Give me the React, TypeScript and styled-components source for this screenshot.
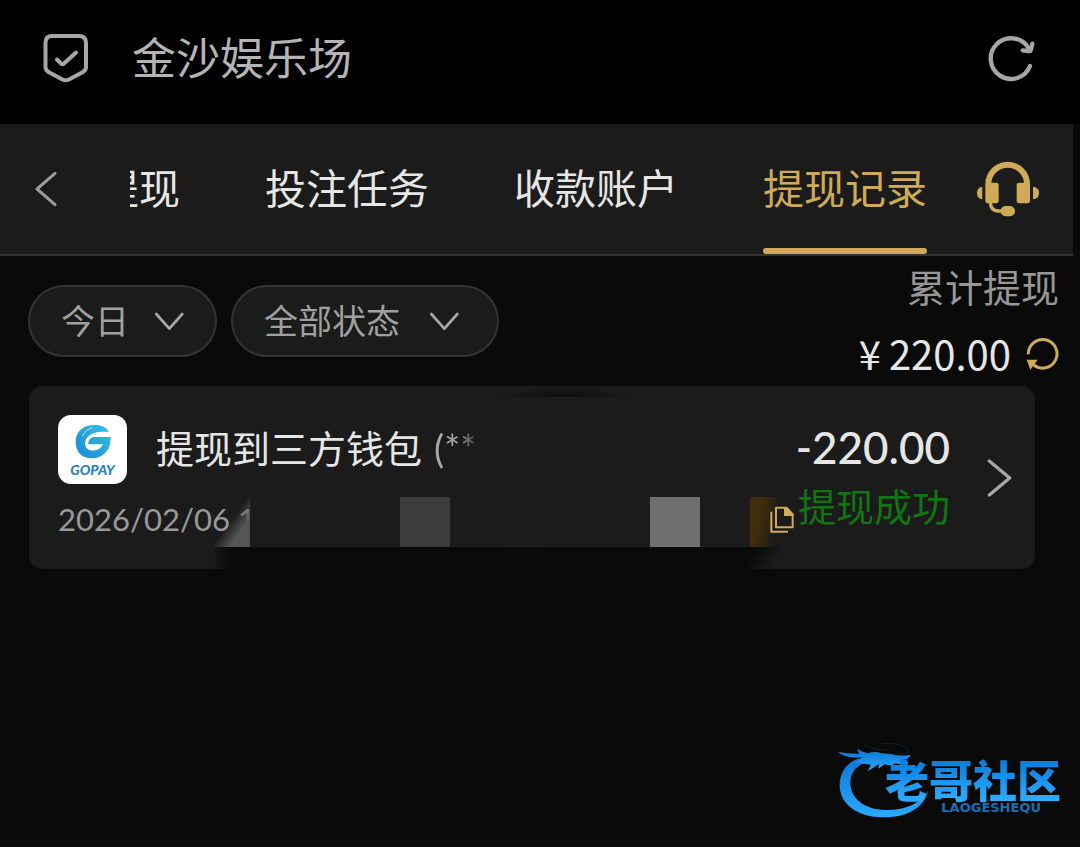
import React from "react";
import styled, { createGlobalStyle } from "styled-components";

const gold = "#cfab58";
const panel = "#1b1b1b";
const page = "#0a0a0a";
const cjk = `"Noto Sans CJK SC", sans-serif`;
const latin = `Lato, "Noto Sans CJK SC", sans-serif`;

const GlobalStyle = createGlobalStyle`
  * { box-sizing: border-box; }
  body {
    margin: 0;
    background: ${page};
    color: #e6e6e6;
    font-family: ${cjk};
  }
  button, select {
    margin: 0;
    padding: 0;
    border: 0;
    background: none;
    color: inherit;
    font: inherit;
    cursor: pointer;
  }
  svg { display: block; flex: none; }
  h1, h2, p { margin: 0; font-weight: 400; }
`;

const Page = styled.div`
  position: relative;
  min-height: 100vh;
  overflow: hidden;
`;

const TopBar = styled.header`
  display: flex;
  align-items: center;
  height: 124px;
  padding: 0 44px 8px 42px;
  background: #000;
`;

const SiteTitle = styled.h1`
  flex: 1;
  margin-left: 42px;
  padding-bottom: 4px;
  color: #b4b4b4;
  font-size: 44px;
  line-height: 64px;
`;

const TabBar = styled.div`
  display: flex;
  align-items: center;
  height: 132px;
  margin-right: 7px;
  padding: 0 33px 0 34px;
  background: ${panel};
  border-bottom: 2px solid #333;
`;

const BackButton = styled.button`
  width: 96px;
`;

const Tabs = styled.nav`
  display: flex;
  flex: 1;
  align-self: stretch;
  justify-content: flex-end;
  gap: 85px;
  min-width: 0;
  margin-right: 49px;
  overflow: hidden;
`;

const Tab = styled.button<{ $active?: boolean }>`
  display: flex;
  flex: none;
  flex-direction: column;
  color: ${(p) => (p.$active ? gold : "#e6e6e6")};
  font-size: 41px;
  line-height: 124px;
  white-space: nowrap;

  &::after {
    content: "";
    width: 100%;
    height: 6px;
    border-radius: 3px;
    background: ${(p) => (p.$active ? gold : "transparent")};
  }
`;

const Summary = styled.section`
  display: flex;
  align-items: center;
  justify-content: space-between;
  padding: 0 21px 0 28px;
`;

const Filters = styled.div`
  display: flex;
  gap: 14px;
`;

const Pill = styled.label<{ $wide?: boolean }>`
  display: flex;
  align-items: center;
  gap: ${(p) => (p.$wide ? 29 : 25)}px;
  height: 72px;
  padding: 0 ${(p) => (p.$wide ? 37 : 30)}px 0 31px;
  border: 2px solid #333;
  border-radius: 36px;
  background: ${panel};
  color: #a0a0a0;
`;

const PillSelect = styled.select`
  appearance: none;
  padding-bottom: 2px;
  font-size: 34px;
  line-height: 50px;
  outline: none;
`;

const Totals = styled.div`
  display: flex;
  flex-direction: column;
  align-items: flex-end;
`;

const TotalLabel = styled.p`
  padding-bottom: 4px;
  color: #979797;
  font-size: 38px;
  line-height: 60px;
`;

const TotalValue = styled.div`
  display: flex;
  align-items: center;
  font-size: 40px;
  line-height: 66px;
`;

const Currency = styled.span`
  margin-right: 8px;
`;

const RefreshTotal = styled.button`
  margin-left: 15px;
`;

const Card = styled.article`
  position: relative;
  display: flex;
  align-items: center;
  margin: 0 45px 0 29px;
  padding: 29px 23px 28px 29px;
  border-radius: 14px;
  background: ${panel};
`;

const Details = styled.div`
  flex: 1;
  min-width: 0;
`;

const TitleRow = styled.div`
  display: flex;
  align-items: center;
  gap: 29px;
`;

const WalletLogo = styled.div`
  display: flex;
  flex-direction: column;
  align-items: center;
  width: 69px;
  height: 69px;
  padding-top: 8px;
  border-radius: 13px;
  background: #fff;
`;

const WalletName = styled.span`
  color: #2b7fc0;
  font: italic 900 14px/20px ${latin};
`;

const RecordTitle = styled.h2`
  padding-bottom: 4px;
  font-size: 38px;
  line-height: 56px;
  white-space: nowrap;
`;

const Account = styled.span`
  margin-left: 12px;
  font-family: ${latin};
  color: transparent;
  background: linear-gradient(90deg, #a8a8a8 50%, #4a4a4a);
  background-clip: text;
`;

const MetaRow = styled.div`
  display: flex;
  align-items: center;
  justify-content: space-between;
  height: 44px;
  margin-top: 13px;
  padding-right: 2px;
  color: #999;
  font: 400 31px/44px ${latin};
`;

const CopyButton = styled.button`
  position: relative;
  z-index: 1;
`;

const Result = styled.div`
  align-self: flex-start;
  text-align: right;
`;

const Amount = styled.p`
  font: 500 44px/64px ${latin};
`;

const Status = styled.p`
  color: #127412;
  font-size: 38px;
  line-height: 52px;
`;

const OpenButton = styled.button`
  margin-left: 37px;
`;

const Tile = styled.span<{ $left: number; $width: number; $fill: string }>`
  position: absolute;
  top: 111px;
  left: ${(p) => p.$left}px;
  width: ${(p) => p.$width}px;
  height: 50px;
  background: ${(p) => p.$fill};
`;

const BottomShade = styled.span`
  position: absolute;
  top: 161px;
  bottom: 0;
  left: 184px;
  width: 572px;
  background:
    linear-gradient(90deg, transparent, ${page} 16px, ${page} 280px, transparent 280px),
    linear-gradient(120deg, transparent 240px, ${page} 240px, ${page} calc(100% - 36px), transparent calc(100% - 12px));
`;

const TopShade = styled.span`
  position: absolute;
  top: 2px;
  left: 464px;
  width: 144px;
  height: 9px;
  background: radial-gradient(ellipse 72px 9px at 50% 100%, #101010 20%, transparent);
`;

const Watermark = styled.aside`
  position: absolute;
  right: 19px;
  bottom: 28px;
  display: flex;
  align-items: flex-end;
  color: #1d94ee;
`;

const WatermarkText = styled.div`
  display: flex;
  flex-direction: column;
  align-items: center;
  margin-left: -44px;
  padding-bottom: 5px;
`;

const WatermarkName = styled.strong`
  font-size: 44px;
  font-weight: 900;
  line-height: 52px;
  color: transparent;
  background: linear-gradient(#0d7fdc 20%, #2eabff 90%);
  background-clip: text;
`;

const WatermarkLatin = styled.span`
  align-self: flex-end;
  margin: -3px 20px 0 0;
  color: #1a6fb4;
  font: 700 13px/12px "DejaVu Sans", sans-serif;
`;

const ShieldIcon = () => (
  <svg width="48" height="50" viewBox="0 0 48 50" fill="none" stroke="#a6a6a6" strokeWidth="4" strokeLinecap="round" strokeLinejoin="round">
    <path d="M10 3H37Q44 3 44 10V34Q44 37 41 39L27 46.500Q23.700 48 20.500 46.500L6.500 39Q3.500 37 3.500 34V10Q3.500 3 10 3Z" />
    <path d="M15 26.500L19 30.500Q20.500 32 22 30.500L34 19.500" />
  </svg>
);

const ReloadIcon = () => (
  <svg width="48" height="48" viewBox="146 102 144 144" fill="none" stroke="#a6a6a6" strokeWidth="13" strokeLinecap="round" strokeLinejoin="round">
    <path d="M272 198A61 61 0 1 1 266 142L272 153" />
    <path d="M279 131L275 148Q273 154 266 153L250 151" />
  </svg>
);

const BackIcon = () => (
  <svg width="24" height="36" viewBox="102 153 72 108" fill="none" stroke="#9c9c9c" strokeWidth="9" strokeLinecap="round" strokeLinejoin="round">
    <path d="M165 160L111 207L165 254" />
  </svg>
);

const HeadsetIcon = () => (
  <svg width="64" height="56" viewBox="108 485 192 168" fill={gold}>
    <path d="M136 558V554A67 67 0 0 1 270 554V558H252V554A49 49 0 0 0 154 554V558Z" />
    <rect x="136" y="550" width="40" height="62" rx="7" />
    <rect x="230" y="550" width="40" height="62" rx="7" />
    <path d="M127 562V600Q111 598 111 581Q111 564 127 562Z" />
    <path d="M279 562V600Q297 598 297 581Q297 564 279 562Z" />
    <path d="M151 610Q152 634 174 635H190" fill="none" stroke={gold} strokeWidth="10" />
    <rect x="182" y="620" width="43" height="31" rx="15" />
  </svg>
);

const DownIcon = () => (
  <svg width="31" height="19" viewBox="464 140 93 57" fill="none" stroke="#a8a8a8" strokeWidth="8" strokeLinecap="round" strokeLinejoin="round">
    <path d="M471 146L510 190L549 146" />
  </svg>
);

const CycleIcon = () => (
  <svg width="33" height="33" viewBox="738 260 99 99">
    <path d="M745 312A43 43 0 1 1 760 343" fill="none" stroke={gold} strokeWidth="9" />
    <path d="M740 328H773L751 358Z" fill={gold} />
  </svg>
);

const CopyIcon = () => (
  <svg width="24" height="27" viewBox="392 391 72 81" fill="none" stroke={gold} strokeWidth="6">
    <path d="M410 396H441L460 416V455H410Z" strokeLinejoin="round" />
    <path d="M434 394H443L462 414V421H434Z" fill={gold} stroke="none" />
    <path d="M396 408V468H446" />
  </svg>
);

const OpenIcon = () => (
  <svg width="25" height="38" viewBox="1041 252 75 114" fill="none" stroke="#a6a6a6" strokeWidth="10" strokeLinecap="round" strokeLinejoin="round">
    <path d="M1048 258L1109 309L1048 360" />
  </svg>
);

const WalletMark = () => (
  <svg width="38" height="37" viewBox="161 141 114 111">
    <defs>
      <linearGradient id="wallet" x1="1" y1="0" x2="0" y2="1">
        <stop offset="0" stopColor="#35c3e6" />
        <stop offset="1" stopColor="#1c86d0" />
      </linearGradient>
    </defs>
    <path
      fill="url(#wallet)"
      d="M265 168C243 166 211 166 197 190C189 208 199 224 217 224C233 224 243 216 248 205H203Q205 185 219 183H271C272 220 250 247 214 247C184 247 166 226 166 198C166 165 190 147 222 147C245 147 260 155 265 168Z"
    />
    <path d="M186 180Q196 160 216 155" fill="none" stroke="#fff" strokeWidth="2" />
  </svg>
);

const DragonMark = () => (
  <svg width="92" height="77" viewBox="52 38 276 231">
    <defs>
      <linearGradient id="dragon" x1="0" y1="0" x2="0" y2="1">
        <stop offset="0" stopColor="#0d74d0" />
        <stop offset="1" stopColor="#2aaaff" />
      </linearGradient>
    </defs>
    <g fill="url(#dragon)">
      <path d="M150 84C98 82 60 116 60 168C60 226 116 264 190 264C256 264 312 240 325 184C300 228 246 243 196 242C134 240 92 206 92 160C92 126 116 101 154 97Z" />
      <path d="M54 68Q80 72 118 74L112 58Q128 68 146 72Q164 64 186 72L214 74Q240 82 272 76Q270 92 240 92L266 98L262 110L228 102Q214 112 196 104L176 118L178 104L144 126L154 106Q130 104 110 98Q124 92 128 84Q80 88 54 68Z" />
    </g>
    <path d="M134 46Q170 66 200 62M186 42Q250 40 266 62Q270 74 240 74" fill="none" stroke="#0b2136" strokeWidth="3" />
  </svg>
);

export default function App() {
  return (
    <Page>
      <GlobalStyle />
      <TopBar>
        <ShieldIcon />
        <SiteTitle>金沙娱乐场</SiteTitle>
        <button aria-label="刷新">
          <ReloadIcon />
        </button>
      </TopBar>

      <TabBar>
        <BackButton aria-label="返回">
          <BackIcon />
        </BackButton>
        <Tabs>
          <Tab>提现</Tab>
          <Tab>投注任务</Tab>
          <Tab>收款账户</Tab>
          <Tab $active>提现记录</Tab>
        </Tabs>
        <button aria-label="客服">
          <HeadsetIcon />
        </button>
      </TabBar>

      <main>
        <Summary>
          <Filters>
            <Pill>
              <PillSelect aria-label="日期">
                <option>今日</option>
              </PillSelect>
              <DownIcon />
            </Pill>
            <Pill $wide>
              <PillSelect aria-label="状态">
                <option>全部状态</option>
              </PillSelect>
              <DownIcon />
            </Pill>
          </Filters>
          <Totals>
            <TotalLabel>累计提现</TotalLabel>
            <TotalValue>
              <Currency>¥</Currency>220.00
              <RefreshTotal aria-label="刷新累计">
                <CycleIcon />
              </RefreshTotal>
            </TotalValue>
          </Totals>
        </Summary>

        <Card>
          <Details>
            <TitleRow>
              <WalletLogo>
                <WalletMark />
                <WalletName>GOPAY</WalletName>
              </WalletLogo>
              <RecordTitle>
                提现到三方钱包<Account>(**</Account>
              </RecordTitle>
            </TitleRow>
            <MetaRow>
              <time>2026/02/06 1</time>
              <CopyButton aria-label="复制">
                <CopyIcon />
              </CopyButton>
            </MetaRow>
          </Details>
          <Result>
            <Amount>-220.00</Amount>
            <Status>提现成功</Status>
          </Result>
          <OpenButton aria-label="详情">
            <OpenIcon />
          </OpenButton>
          <TopShade />
          <Tile $left={183} $width={38} $fill="linear-gradient(126deg, transparent 48%, #555 72%)" />
          <Tile $left={221} $width={50} $fill={panel} />
          <Tile $left={371} $width={50} $fill="#3d3d3d" />
          <Tile $left={471} $width={50} $fill="#1c1c1c" />
          <Tile $left={621} $width={50} $fill="#6f6f6f" />
          <Tile $left={721} $width={26} $fill="linear-gradient(100deg, #3f2d0c 40%, transparent 90%)" />
          <BottomShade />
        </Card>
      </main>

      <Watermark>
        <DragonMark />
        <WatermarkText>
          <WatermarkName>老哥社区</WatermarkName>
          <WatermarkLatin>LAOGESHEQU</WatermarkLatin>
        </WatermarkText>
      </Watermark>
    </Page>
  );
}
